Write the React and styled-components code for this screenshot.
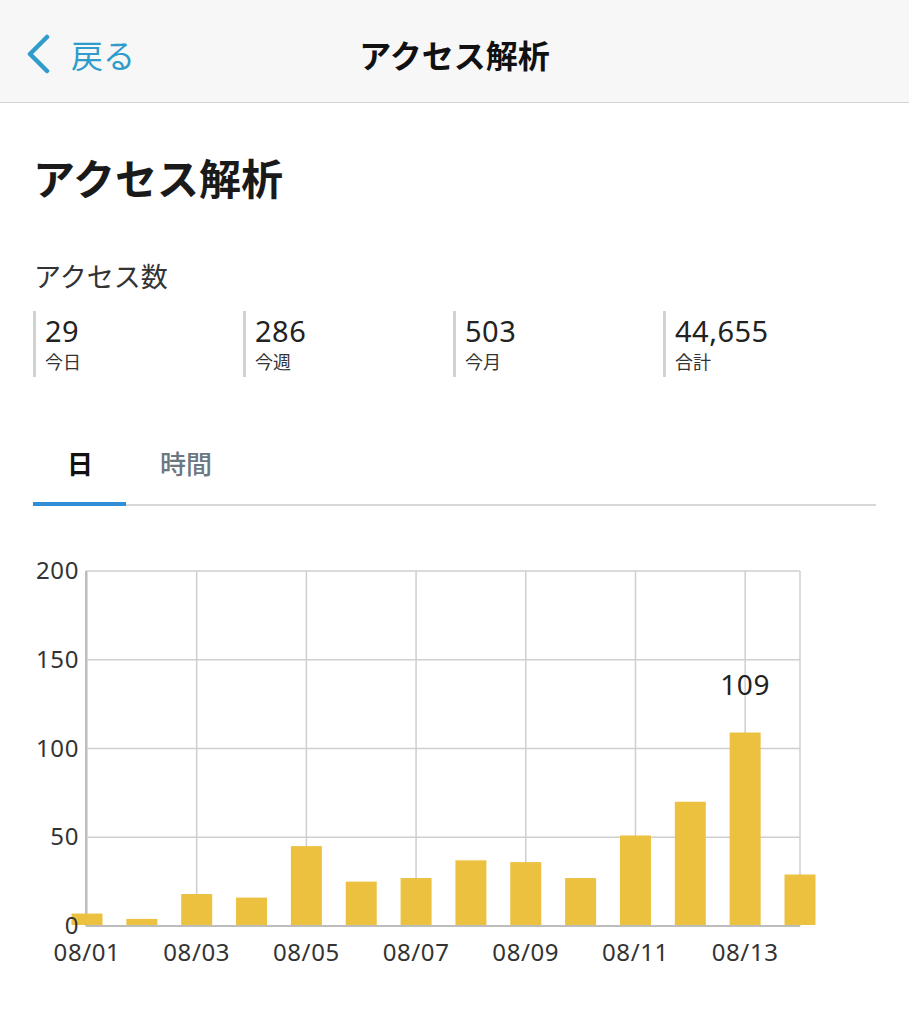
import React from 'react'
import styled, { createGlobalStyle } from 'styled-components'

const GlobalStyle = createGlobalStyle`
  html, body {
    margin: 0;
    padding: 0;
    background: #fff;
  }
  body {
    font-family: 'Noto Sans CJK JP', 'Noto Sans', sans-serif;
    color: #222;
  }
`

const Header = styled.header`
  height: 103px;
  box-sizing: border-box;
  padding-top: 5px;
  background: #f7f7f7;
  border-bottom: 1px solid #d4d4d4;
  display: grid;
  grid-template-columns: 1fr auto 1fr;
  align-items: center;
`

const Back = styled.div`
  display: flex;
  align-items: center;
  gap: 21px;
  padding-left: 26px;
  color: #2f9ccb;
  font-size: 32px;
  line-height: 1;
`

const HeaderTitle = styled.div`
  font-size: 32px;
  font-weight: 700;
  color: #111;
  line-height: 1;
`

const Main = styled.main`
  padding: 0 33px;
  display: flex;
  flex-direction: column;
`

const PageTitle = styled.h1`
  margin: 50px 0 0 0;
  font-size: 42px;
  font-weight: 700;
  line-height: 48px;
  color: #1a1a1a;
`

const SectionLabel = styled.div`
  margin: 57px 0 0 1px;
  font-size: 27px;
  line-height: 36px;
  color: #333;
`

const Stats = styled.div`
  margin-top: 17px;
  display: grid;
  grid-template-columns: repeat(4, 210px);
`

const Stat = styled.div`
  border-left: 3px solid #d2d2d2;
  padding: 4px 0 4px 9px;
  height: 66px;
  box-sizing: border-box;
`

const StatValue = styled.div`
  font-family: 'Noto Sans', 'Open Sans', sans-serif;
  font-size: 29px;
  letter-spacing: 0.5px;
  line-height: 32px;
  color: #222;
`

const StatLabel = styled.div`
  margin-top: 3px;
  font-size: 18px;
  line-height: 22px;
  color: #333;
`

const Tabs = styled.div`
  margin-top: 68px;
  display: flex;
  border-bottom: 2px solid #d8d8d8;
`

const Tab = styled.div`
  padding: 0 33px 21px 34px;
  font-size: 26px;
  line-height: 36px;
  font-weight: ${p => (p.active ? 700 : 500)};
  color: ${p => (p.active ? '#111' : '#6b7781')};
  border-bottom: 4px solid ${p => (p.active ? '#2f8fd6' : 'transparent')};
  margin-bottom: -2px;
`

const ChartBox = styled.div`
  margin: 34px -33px 0;
`

const days = [7, 4, 18, 16, 45, 25, 27, 37, 36, 27, 51, 70, 109, 29]

const plot = { left: 86, right: 800, top: 31, bottom: 386, max: 200 }
const step = (plot.right - 87) / 13
const cx = i => 87 + i * step
const vy = v => plot.bottom - (v / plot.max) * (plot.bottom - plot.top)

const Chart = () => {
  const grid = '#cfcfcf'
  const ticks = [0, 50, 100, 150, 200]
  const label = {
    fontFamily: "'Noto Sans', 'Open Sans', sans-serif",
    fontSize: 24,
    letterSpacing: 0.6,
    fill: '#333'
  }
  return (
    <svg width="909" height="440" viewBox="0 0 909 440">
      {ticks.map(t => (
        <line key={t} x1={plot.left} x2={plot.right} y1={vy(t)} y2={vy(t)} stroke={grid} strokeWidth="1.5" />
      ))}
      {days.map((_, i) => (i % 2 === 0 ? (
        <line key={i} x1={cx(i)} x2={cx(i)} y1={plot.top} y2={plot.bottom} stroke={grid} strokeWidth="1.5" />
      ) : null))}
      <line x1={plot.right} x2={plot.right} y1={plot.top} y2={plot.bottom} stroke={grid} strokeWidth="1.5" />
      <line x1={plot.left} x2={plot.left} y1={plot.top} y2={plot.bottom} stroke="#bdbdbd" strokeWidth="2" />
      {days.map((v, i) => (
        <rect key={i} x={cx(i) - 15.5} y={vy(v)} width="31" height={plot.bottom - 1 - vy(v)} fill="#ecc140" />
      ))}
      <line x1={plot.left} x2={plot.right} y1={plot.bottom} y2={plot.bottom} stroke="#bdbdbd" strokeWidth="2" />
      {ticks.map(t => (
        <text key={t} x="79" y={vy(t) + 8} textAnchor="end" {...label}>{t}</text>
      ))}
      {days.map((_, i) => (i % 2 === 0 ? (
        <text key={i} x={cx(i)} y="421" textAnchor="middle" {...label}>
          {`08/${String(i + 1).padStart(2, '0')}`}
        </text>
      ) : null))}
      <text x={cx(12)} y={vy(109) - 38} textAnchor="middle" {...label} fontSize="28" fill="#222">109</text>
    </svg>
  )
}

const stats = [
  { value: '29', label: '今日' },
  { value: '286', label: '今週' },
  { value: '503', label: '今月' },
  { value: '44,655', label: '合計' }
]

export default function App () {
  return (
    <>
      <GlobalStyle />
      <Header>
        <Back>
          <svg width="24" height="40" viewBox="0 0 24 40">
            <path d="M21 3 L4 20 L21 37" fill="none" stroke="#2f9ccb" strokeWidth="4.5" strokeLinecap="round" strokeLinejoin="round" />
          </svg>
          <span>戻る</span>
        </Back>
        <HeaderTitle>アクセス解析</HeaderTitle>
        <div />
      </Header>
      <Main>
        <PageTitle>アクセス解析</PageTitle>
        <SectionLabel>アクセス数</SectionLabel>
        <Stats>
          {stats.map(s => (
            <Stat key={s.label}>
              <StatValue>{s.value}</StatValue>
              <StatLabel>{s.label}</StatLabel>
            </Stat>
          ))}
        </Stats>
        <Tabs>
          <Tab active>日</Tab>
          <Tab>時間</Tab>
        </Tabs>
        <ChartBox>
          <Chart />
        </ChartBox>
      </Main>
    </>
  )
}
